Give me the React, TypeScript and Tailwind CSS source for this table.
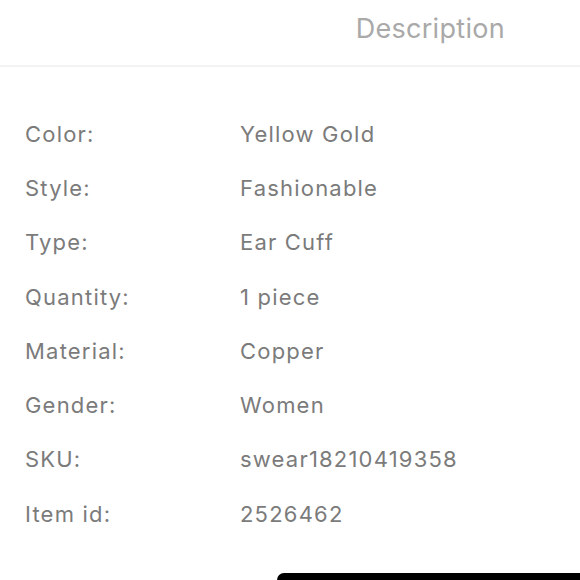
import React from "react";

const rows: [string, string][] = [
  ["Color:", "Yellow Gold"],
  ["Style:", "Fashionable"],
  ["Type:", "Ear Cuff"],
  ["Quantity:", "1 piece"],
  ["Material:", "Copper"],
  ["Gender:", "Women"],
  ["SKU:", "swear18210419358"],
  ["Item id:", "2526462"],
];

const App: React.FC = () => {
  return (
    <div className="w-[580px] h-[580px] overflow-hidden bg-white flex flex-col font-['Inter',sans-serif]">
      <div className="h-[67px] flex justify-end items-start pr-[75px] pt-[13px] border-b-2 border-[#f3f3f3]">
        <span className="text-[27px] leading-[32px] tracking-[0.3px] text-[#a9a9a9]">
          Description
        </span>
      </div>

      <ul className="pt-[40px] pl-[25px]">
        {rows.map(([label, value]) => (
          <li
            key={label}
            className="flex h-[54.3px] items-center text-[22px] tracking-[1.2px] text-[#7b7b7b]"
          >
            <span className="w-[215px] shrink-0">{label}</span>
            <span>{value}</span>
          </li>
        ))}
      </ul>

      <div className="mt-auto flex justify-end">
        <div className="w-[303px] h-[7px] bg-black rounded-tl-[10px]" />
      </div>
    </div>
  );
};

export default App;
